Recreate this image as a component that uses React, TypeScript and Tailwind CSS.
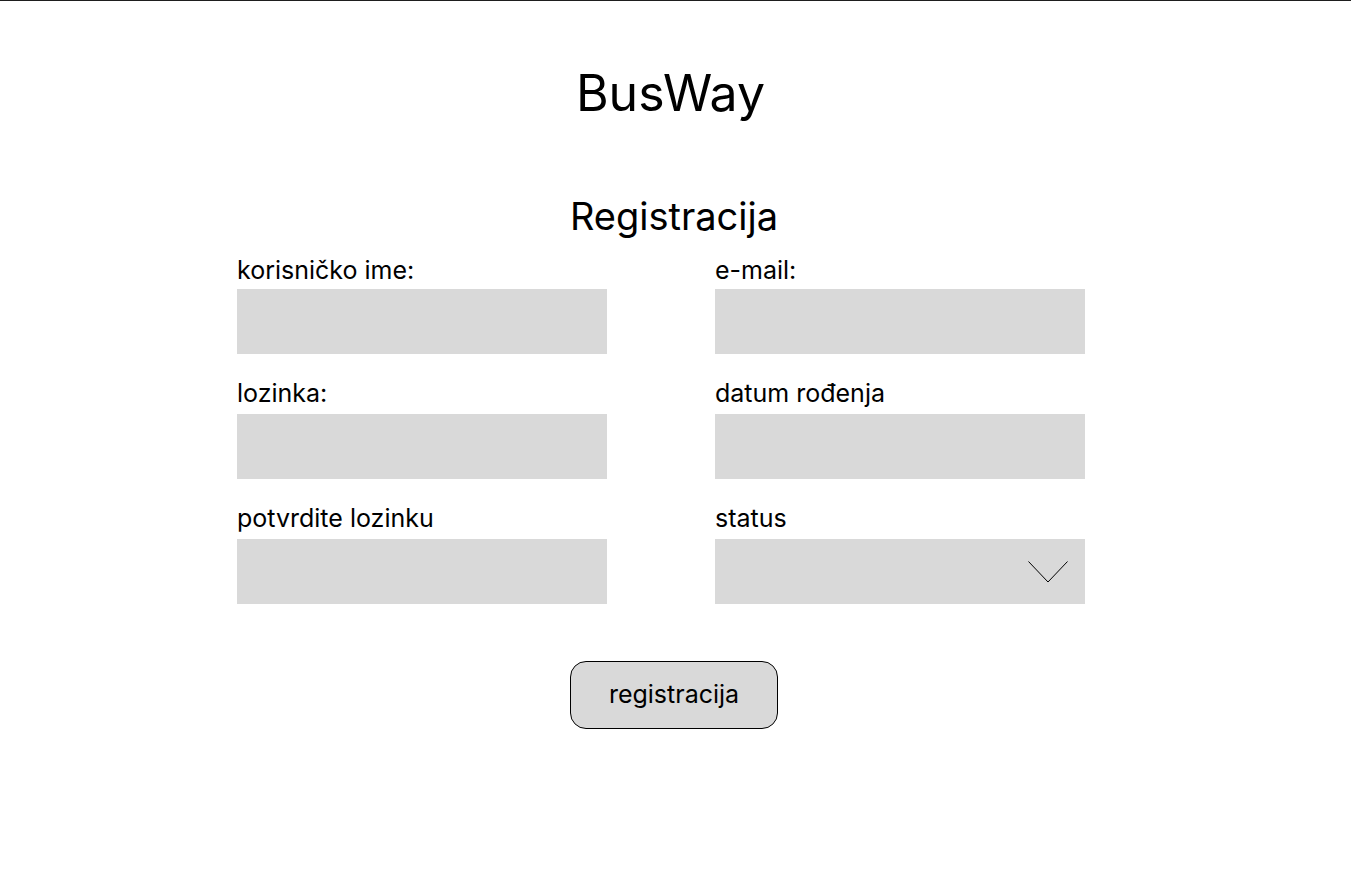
import React from "react";

function Field({ label, select, first }: { label: string; select?: boolean; first?: boolean }) {
  return (
    <div className="flex flex-col">
      <div className="text-[25px] leading-[30px] text-black">{label}</div>
      <div className={`relative h-[65px] w-[370px] bg-[#d9d9d9] ${first ? "mt-[4px]" : "mt-[6px]"}`}>
        {select && (
          <svg
            className="absolute left-[313px] top-[22px]"
            width="40"
            height="22"
            viewBox="0 0 40 22"
            fill="none"
          >
            <path d="M0.5 0.5 L20 21 L39.5 0.5" stroke="#000" strokeWidth="1" />
          </svg>
        )}
      </div>
    </div>
  );
}

export default function App() {
  return (
    <div
      className="min-h-[877px] w-full border-t border-[#1e1e1e] bg-white text-black"
      style={{ fontFamily: "Inter, 'Noto Sans', sans-serif" }}
    >
      <div className="flex justify-center pt-[62px] pr-[10px]">
        <h1 className="text-[50px] leading-[60px] font-normal">BusWay</h1>
      </div>
      <div className="flex justify-center pt-[70px] pr-[3px]">
        <h2 className="text-[38px] leading-[46px] font-normal">Registracija</h2>
      </div>
      <div className="ml-[237px] mt-[16px] grid w-[848px] grid-cols-[370px_370px] gap-x-[108px] gap-y-[24px]">
        <Field label="korisničko ime:" first />
        <Field label="e-mail:" first />
        <Field label="lozinka:" />
        <Field label="datum rođenja" />
        <Field label="potvrdite lozinku" />
        <Field label="status" select />
      </div>
      <div className="mt-[57px] flex justify-center pr-[3px]">
        <button className="h-[68px] w-[208px] rounded-[16px] border border-black bg-[#d9d9d9] text-[25px] text-black">
          registracija
        </button>
      </div>
    </div>
  );
}
